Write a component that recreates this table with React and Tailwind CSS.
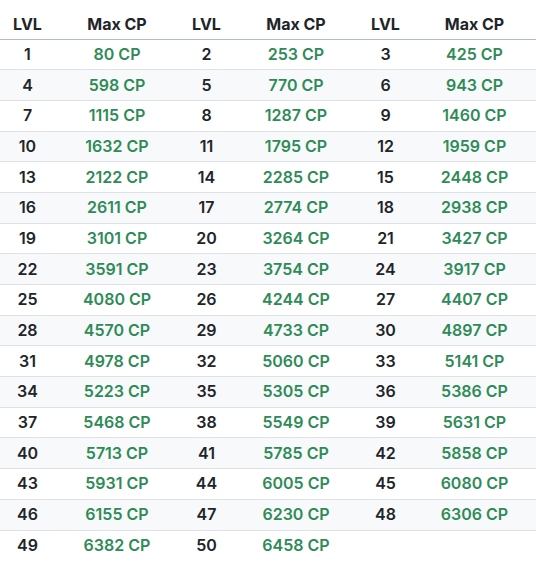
const rows = []
for (let i = 0; i < 17; i++) rows.push([i * 3 + 1, i * 3 + 2, i * 3 + 3])

const cp = {
  1: 80, 2: 253, 3: 425, 4: 598, 5: 770, 6: 943, 7: 1115, 8: 1287, 9: 1460,
  10: 1632, 11: 1795, 12: 1959, 13: 2122, 14: 2285, 15: 2448, 16: 2611, 17: 2774,
  18: 2938, 19: 3101, 20: 3264, 21: 3427, 22: 3591, 23: 3754, 24: 3917, 25: 4080,
  26: 4244, 27: 4407, 28: 4570, 29: 4733, 30: 4897, 31: 4978, 32: 5060, 33: 5141,
  34: 5223, 35: 5305, 36: 5386, 37: 5468, 38: 5549, 39: 5631, 40: 5713, 41: 5785,
  42: 5858, 43: 5931, 44: 6005, 45: 6080, 46: 6155, 47: 6230, 48: 6306, 49: 6382,
  50: 6458,
}

const cols = 'grid grid-cols-[55px_124px_55px_124px_55px_123px]'

export default function App() {
  return (
    <div className="w-[536px] h-[573px] bg-white pt-[7.5px] text-[16px] font-semibold" style={{ fontFamily: 'Inter, "Noto Sans", sans-serif' }}>
      {/* header */}
      <div className={`${cols} h-[32px] pt-[1px] items-center text-center text-[#212529] font-bold border-b border-[#b3bbc3]`}>
        <div>LVL</div><div>Max CP</div>
        <div>LVL</div><div>Max CP</div>
        <div>LVL</div><div>Max CP</div>
      </div>

      {rows.map((r, i) => (
        <div
          key={i}
          className={`${cols} h-[30.7px] pb-[1px] items-center text-center ${i % 2 ? 'bg-[#f8f9fa]' : 'bg-white'} ${i < rows.length - 1 ? 'border-b border-[#dee2e6]' : ''}`}
        >
          {r.map(lvl => lvl <= 50 ? (
            <div key={lvl} className="contents">
              <div className="text-[#212529]">{lvl}</div>
              <div className="text-[#2e8b57]">{cp[lvl]} CP</div>
            </div>
          ) : (
            <div key={lvl} className="contents"><div /><div /></div>
          ))}
        </div>
      ))}
    </div>
  )
}
